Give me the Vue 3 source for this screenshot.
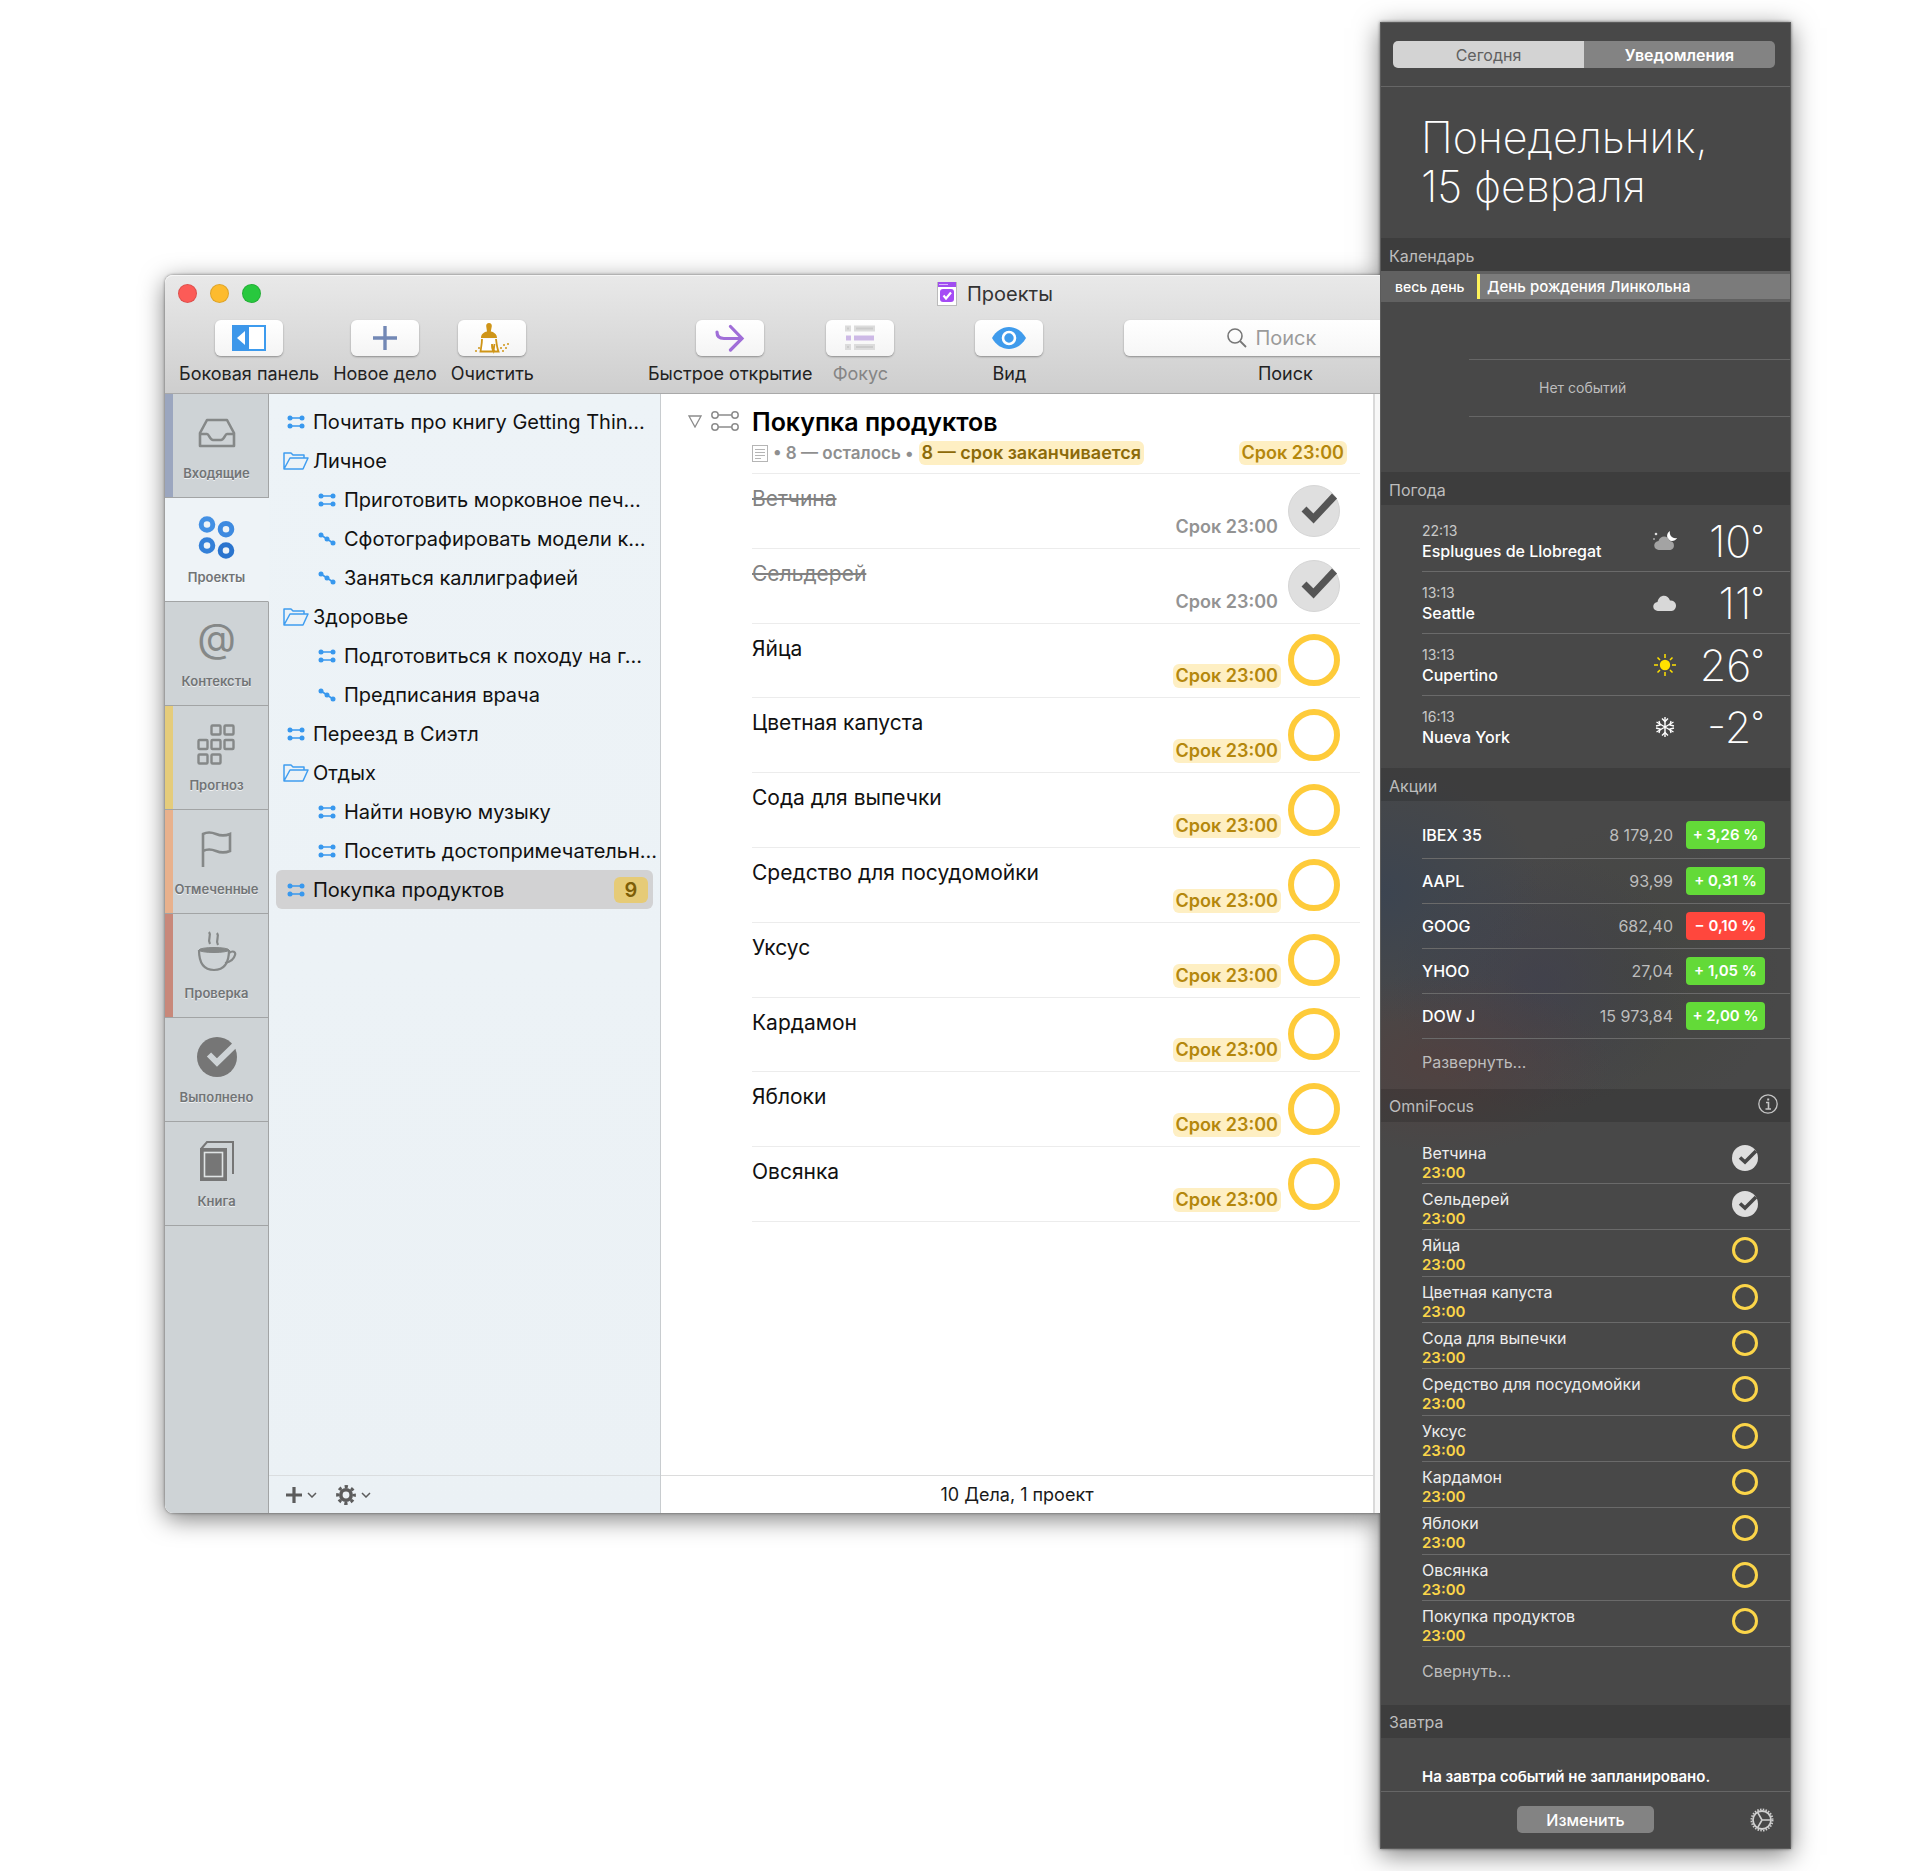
<script setup>
import { ref } from 'vue'

const tabs = [
  { id: 'inbox', label: 'Входящие', mark: 'blue' },
  { id: 'projects', label: 'Проекты' },
  { id: 'contexts', label: 'Контексты' },
  { id: 'forecast', label: 'Прогноз', mark: 'yellow' },
  { id: 'flagged', label: 'Отмеченные', mark: 'orange' },
  { id: 'review', label: 'Проверка', mark: 'red' },
  { id: 'done', label: 'Выполнено' },
  { id: 'book', label: 'Книга' }
]
const activeTab = ref('projects')

const tree = [
  { name: 'Почитать про книгу Getting Thin…', type: 'parallel' },
  { name: 'Личное', type: 'folder' },
  { name: 'Приготовить морковное печ…', type: 'parallel', nested: true },
  { name: 'Сфотографировать модели к…', type: 'sequential', nested: true },
  { name: 'Заняться каллиграфией', type: 'sequential', nested: true },
  { name: 'Здоровье', type: 'folder' },
  { name: 'Подготовиться к походу на г…', type: 'parallel', nested: true },
  { name: 'Предписания врача', type: 'sequential', nested: true },
  { name: 'Переезд в Сиэтл', type: 'parallel' },
  { name: 'Отдых', type: 'folder' },
  { name: 'Найти новую музыку', type: 'parallel', nested: true },
  { name: 'Посетить достопримечательн…', type: 'parallel', nested: true },
  { name: 'Покупка продуктов', type: 'parallel', count: 9 }
]
const selected = ref('Покупка продуктов')

const tasks = ref([
  { name: 'Ветчина', done: true },
  { name: 'Сельдерей', done: true },
  { name: 'Яйца', done: false },
  { name: 'Цветная капуста', done: false },
  { name: 'Сода для выпечки', done: false },
  { name: 'Средство для посудомойки', done: false },
  { name: 'Уксус', done: false },
  { name: 'Кардамон', done: false },
  { name: 'Яблоки', done: false },
  { name: 'Овсянка', done: false }
])
const project = ref({ name: 'Покупка продуктов', done: false })

const weather = [
  { time: '22:13', city: 'Esplugues de Llobregat', icon: 'night', temp: '10' },
  { time: '13:13', city: 'Seattle', icon: 'cloud', temp: '11' },
  { time: '13:13', city: 'Cupertino', icon: 'sun', temp: '26' },
  { time: '16:13', city: 'Nueva York', icon: 'snow', temp: '-2' }
]

const stocks = [
  { name: 'IBEX 35', value: '8 179,20', change: '+ 3,26 %' },
  { name: 'AAPL', value: '93,99', change: '+ 0,31 %' },
  { name: 'GOOG', value: '682,40', change: '− 0,10 %', down: true },
  { name: 'YHOO', value: '27,04', change: '+ 1,05 %' },
  { name: 'DOW J', value: '15 973,84', change: '+ 2,00 %' }
]

const search = ref('')
</script>

<template>
  <div class="desktop">
    <main class="window">
      <header class="toolbar">
        <div class="titlebar">
          <div class="lights">
            <button class="light light_red" aria-label="Закрыть"></button>
            <button class="light light_yellow" aria-label="Свернуть"></button>
            <button class="light light_green" aria-label="Развернуть"></button>
          </div>
          <h1 class="title">
            <svg width="20" height="24" viewBox="0 0 20 24">
              <rect x="0.5" y="0.5" width="19" height="23" fill="#fff" stroke="#bbb" />
              <rect x="1" y="0" width="18" height="5" fill="#a04df0" />
              <rect x="2" y="2" width="9" height="1" fill="#d9b8fb" />
              <rect x="3" y="7" width="14" height="13" rx="3" fill="#a54bf5" />
              <path d="M6.500 13.500l2.500 3 5-6" fill="none" stroke="#fff" stroke-width="2.200" />
            </svg>
            Проекты
          </h1>
        </div>
        <div class="tools">
          <button class="tool">
            <span class="tool__box">
              <svg width="34" height="26" viewBox="0 0 34 26">
                <rect x="1" y="1" width="32" height="24" fill="#fff" stroke="#3d9bee" stroke-width="2" />
                <rect x="0" y="0" width="17" height="26" fill="#3d97ea" />
                <path d="M13 6v14L5 13z" fill="#fff" />
              </svg>
            </span>
            <span class="tool__label">Боковая панель</span>
          </button>
          <button class="tool">
            <span class="tool__box">
              <svg width="24" height="24" viewBox="0 0 24 24">
                <path d="M12 0v24M0 12h24" stroke="#7388b5" stroke-width="3.400" />
              </svg>
            </span>
            <span class="tool__label">Новое дело</span>
          </button>
          <button class="tool">
            <span class="tool__box">
              <svg width="34" height="32" viewBox="0 0 34 32">
                <path d="M14 1c2 0 3 1.500 2.800 3.200l-1 5.300c3.500.8 6.200 3 6.200 6.500H6c0-3.500 2.500-5.700 6-6.500L11.200 4.200C11 2.500 12 1 14 1z" fill="#cf9518" />
                <path d="M7 17c0 5-1 9-1.500 12.500h18C22 26 21.500 21 21 17M17 22c0 3 .5 5 1.500 7l1-7" fill="#fff" stroke="#cf9518" stroke-width="1.800" />
                <path d="M16 22l1 7h3z" fill="#cf9518" />
                <path d="M0 29h2M3 26h2M27 29h2M30 26h2M28 23h2M32 22h2M25 26h2" stroke="#cf9518" stroke-width="1.600" />
              </svg>
            </span>
            <span class="tool__label">Очистить</span>
          </button>
          <button class="tool tool_open">
            <span class="tool__box">
              <svg width="30" height="28" viewBox="0 0 30 28">
                <path d="M2 8c0 4.500 3 6.500 7 6.500h17M15.500 2.500L27 14.500 15.500 26" fill="none" stroke="#a06ed8" stroke-width="3.200" stroke-linecap="round" stroke-linejoin="miter" />
              </svg>
            </span>
            <span class="tool__label">Быстрое открытие</span>
          </button>
          <button class="tool" disabled>
            <span class="tool__box">
              <svg width="30" height="26" viewBox="0 0 30 26">
                <path d="M0 3.500h6M9 3.500h21M0 22h6M9 22h21" stroke="#dcdcdc" stroke-width="6" />
                <path d="M2 3.500h2M11 3.500h17M2 22h2M11 22h17" stroke="#cbcbcb" stroke-width="2" />
                <path d="M1 13h5M9 13h20" stroke="#cdb9e6" stroke-width="5" />
              </svg>
            </span>
            <span class="tool__label tool__label_off">Фокус</span>
          </button>
          <button class="tool tool_far">
            <span class="tool__box">
              <svg width="34" height="22" viewBox="0 0 34 22">
                <path d="M0 11C4 4 10 0 17 0s13 4 17 11c-4 7-10 11-17 11S4 18 0 11z" fill="#3f9bec" />
                <circle cx="17" cy="11" r="6" fill="none" stroke="#fff" stroke-width="2.600" />
              </svg>
            </span>
            <span class="tool__label">Вид</span>
          </button>
          <div class="search tool_far">
            <div class="search__box">
              <svg width="20" height="20" viewBox="0 0 20 20">
                <circle cx="8" cy="8" r="7" fill="none" stroke="#777" stroke-width="1.600" />
                <path d="M13 13l6 6" stroke="#777" stroke-width="1.800" />
              </svg>
              <input id="search" v-model="search" class="search__input" type="text" placeholder="Поиск">
            </div>
            <label class="tool__label" for="search">Поиск</label>
          </div>
        </div>
      </header>

      <div class="body">
        <nav class="tabs">
          <button v-for="tab in tabs" :key="tab.id" class="tab" :class="[tab.mark && 'tab_' + tab.mark, { tab_active: activeTab === tab.id }]" @click="activeTab = tab.id">
            <span class="tab__icon">
              <svg v-if="tab.id === 'inbox'" width="38" height="30" viewBox="0 0 38 30" fill="none" stroke="#858888" stroke-width="2.600" stroke-linejoin="round">
                <path d="M2 15L9 2h20l7 13v13H2z" />
                <path d="M2 16h7c2 0 3 6 6 6h8c3 0 4-6 6-6h7" />
              </svg>
              <svg v-else-if="tab.id === 'projects'" width="37" height="43" viewBox="0 0 37 43" fill="none" stroke-width="5">
                <circle cx="9" cy="8.500" r="5.800" stroke="#4390e4" />
                <circle cx="28" cy="13.200" r="5.800" stroke="#3e8ae0" />
                <circle cx="9" cy="29.500" r="5.800" stroke="#3480d8" />
                <circle cx="28" cy="34.500" r="5.800" stroke="#2a74ce" />
              </svg>
              <span v-else-if="tab.id === 'contexts'" class="tab__at">@</span>
              <svg v-else-if="tab.id === 'forecast'" width="39" height="42" viewBox="0 0 39 42" fill="none" stroke="#858888" stroke-width="2.400">
                <rect x="14.500" y="1.500" width="9" height="9" rx="1" />
                <rect x="27.500" y="1.500" width="9" height="9" rx="1" />
                <rect x="1.500" y="16" width="9" height="9" rx="1" />
                <rect x="14.500" y="16" width="9" height="9" rx="1" />
                <rect x="27.500" y="16" width="9" height="9" rx="1" />
                <rect x="1.500" y="30.500" width="9" height="9" rx="1" />
                <rect x="14.500" y="30.500" width="9" height="9" rx="1" />
              </svg>
              <svg v-else-if="tab.id === 'flagged'" width="31" height="36" viewBox="0 0 31 36" fill="none" stroke="#858888" stroke-width="2.600">
                <path d="M2 36V3c4-2 8-2 13 0s9 2 14 0v17c-5 2-9 2-14 0s-9-2-13 0" />
              </svg>
              <svg v-else-if="tab.id === 'review'" width="40" height="44" viewBox="0 0 40 44" fill="none" stroke="#858888" stroke-width="2.200">
                <path d="M12 1c3 4-2 6 1 12M20 2c3 4-2 6 1 12" />
                <path d="M2 19c0 13 5 20 15 20s15-7 15-20" />
                <ellipse cx="17" cy="19" rx="15" ry="2.500" fill="#858888" stroke-width="1" />
                <path d="M32 22c4-3 7-1 6 2-1 4-5 7-10 8" />
              </svg>
              <svg v-else-if="tab.id === 'done'" width="40" height="40" viewBox="0 0 40 40">
                <circle cx="20" cy="20" r="20" fill="#767676" />
                <path d="M12 17.500l8 8L38 8" fill="none" stroke="#ced3d6" stroke-width="6" />
              </svg>
              <svg v-else width="34" height="40" viewBox="0 0 34 40" fill="none" stroke="#767676" stroke-width="2">
                <path d="M1 8v31h25V8zM1 8l6-7h26v32" />
                <rect x="1.500" y="8" width="24" height="31" fill="#767676" stroke="none" />
                <rect x="4.500" y="11.500" width="18" height="24" stroke="#dfe3e4" stroke-width="1.600" />
              </svg>
            </span>
            {{ tab.label }}
          </button>
        </nav>

        <aside class="sidebar">
          <ul class="tree">
            <li v-for="item in tree" :key="item.name">
              <button class="node" :class="{ node_nested: item.nested, node_selected: selected === item.name }" @click="selected = item.name">
                <span class="node__icon">
                  <svg v-if="item.type === 'folder'" width="26" height="18" viewBox="0 0 26 18" fill="none" stroke="#3f9df0" stroke-width="1.500" stroke-linejoin="round">
                    <path d="M1 17V1h7l2 2h11v3M1 17L7 6h18l-5 11z" />
                  </svg>
                  <svg v-else-if="item.type === 'parallel'" width="18" height="14" viewBox="0 0 18 14" fill="#3898ee">
                    <path d="M3 3h12M3 11h12" stroke="#3898ee" stroke-width="1.600" />
                    <circle cx="3" cy="3" r="2.500" />
                    <circle cx="15" cy="3" r="2.500" />
                    <circle cx="3" cy="11" r="2.500" />
                    <circle cx="15" cy="11" r="2.500" />
                  </svg>
                  <svg v-else width="18" height="14" viewBox="0 0 18 14" fill="#3898ee">
                    <path d="M3 3l12 8" stroke="#3898ee" stroke-width="1.600" />
                    <circle cx="3" cy="3" r="2.500" />
                    <circle cx="9" cy="7" r="2.500" />
                    <circle cx="15" cy="11" r="2.500" />
                  </svg>
                </span>
                <span class="node__name">{{ item.name }}</span>
                <span v-if="item.count" class="node__count">{{ item.count }}</span>
              </button>
            </li>
          </ul>
          <footer class="actions">
            <button class="action" aria-label="Добавить">
              <svg width="16" height="16" viewBox="0 0 16 16"><path d="M8 0v16M0 8h16" stroke="#5c5c5c" stroke-width="3.200" /></svg>
              <svg width="10" height="6" viewBox="0 0 10 6"><path d="M1 1l4 4 4-4" fill="none" stroke="#5c5c5c" stroke-width="1.500" /></svg>
            </button>
            <button class="action" aria-label="Действия">
              <svg width="20" height="20" viewBox="0 0 20 20" fill="none" stroke="#5c5c5c">
                <circle cx="10" cy="10" r="5.200" stroke-width="3.600" />
                <circle cx="10" cy="10" r="8.400" stroke-width="3" stroke-dasharray="3.300 3.300" stroke-dashoffset="1.650" />
              </svg>
              <svg width="10" height="6" viewBox="0 0 10 6"><path d="M1 1l4 4 4-4" fill="none" stroke="#5c5c5c" stroke-width="1.500" /></svg>
            </button>
          </footer>
        </aside>

        <section class="content">
          <header class="project">
            <div class="project__marks">
              <svg width="14" height="13" viewBox="0 0 14 13"><path d="M1 1h12L7 12z" fill="none" stroke="#8c8c8c" stroke-width="1.300" /></svg>
              <svg width="28" height="20" viewBox="0 0 28 20" fill="none" stroke="#8c8c8c" stroke-width="1.500">
                <circle cx="4" cy="4" r="3.200" />
                <circle cx="24" cy="4" r="3.200" />
                <circle cx="4" cy="16" r="3.200" />
                <circle cx="24" cy="16" r="3.200" />
                <path d="M7 4h14M7 16h14" />
              </svg>
            </div>
            <div class="project__info">
              <h2 class="project__title">{{ project.name }}</h2>
              <p class="project__meta">
                <svg width="16" height="17" viewBox="0 0 16 17" fill="none" stroke="#b5b5b5">
                  <rect x="0.500" y="0.500" width="15" height="16" />
                  <path d="M3 4.500h10M3 7.500h10M3 10.500h10M3 13.500h6" />
                </svg>
                <span>• 8 — осталось •</span>
                <span class="badge badge_dark">8 — срок заканчивается</span>
                <span class="badge project__due">Срок 23:00</span>
              </p>
            </div>
          </header>
          <ul class="tasks">
            <li v-for="(task, i) in tasks" :key="task.name" class="task">
              <label class="task__name" :class="{ task__name_done: task.done }" :for="'task' + i">{{ task.name }}</label>
              <span class="badge task__due" :class="{ badge_off: task.done }">Срок 23:00</span>
              <span class="check">
                <input :id="'task' + i" v-model="task.done" class="check__input" type="checkbox">
                <svg v-if="task.done" class="check__mark" viewBox="0 0 52 52">
                  <path d="M16 24l9.500 9.500L46.500 11" fill="none" stroke="#555" stroke-width="7" />
                </svg>
              </span>
            </li>
          </ul>
          <footer class="status">10 Дела, 1 проект</footer>
        </section>
      </div>
    </main>

    <aside class="panel">
      <div class="switch">
        <button class="switch__btn switch__btn_on">Сегодня</button>
        <button class="switch__btn">Уведомления</button>
      </div>
      <p class="date">Понедельник,<br>15 февраля</p>

      <h3 class="head">Календарь</h3>
      <div class="allday">
        <span class="allday__label">весь день</span>
        <span class="allday__event">День рождения Линкольна</span>
      </div>
      <div class="agenda">
        <p class="agenda__empty">Нет событий</p>
      </div>

      <h3 class="head">Погода</h3>
      <ul class="weather">
        <li v-for="place in weather" :key="place.city" class="place">
          <div class="place__text">
            <span class="place__time">{{ place.time }}</span>
            <span class="place__city">{{ place.city }}</span>
          </div>
          <svg v-if="place.icon === 'night'" width="26" height="24" viewBox="0 0 26 24">
            <path d="M18 2c-5 3-3 10 2 10 2 0 4-1 5-3-5 1-8-3-7-7z" fill="#fff" />
            <circle cx="4" cy="5" r="1.300" fill="#ddd" />
            <circle cx="2" cy="10" r="1" fill="#aaa" />
            <path d="M7 21a4.500 4.500 0 0 1-.5-9C8 6 16 6 18 12a4.600 4.600 0 0 1 .5 9z" fill="#a3a3a3" />
          </svg>
          <svg v-else-if="place.icon === 'cloud'" width="26" height="24" viewBox="0 0 26 24">
            <path d="M6 20a4.500 4.500 0 0 1-.5-9C7 3 16 3 18 9.500a5.200 5.200 0 0 1 1.500 10.500z" fill="#d8d8d8" />
          </svg>
          <svg v-else-if="place.icon === 'sun'" width="26" height="24" viewBox="0 0 26 24">
            <circle cx="13" cy="12" r="5.200" fill="#ffe100" />
            <path d="M13 1v4M13 19v4M2 12h4M20 12h4M5.500 4.500l2.500 2.500M18 17l2.500 2.500M5.500 19.500L8 17M18 7l2.500-2.500" stroke="#ffe100" stroke-width="1.500" />
          </svg>
          <svg v-else width="26" height="24" viewBox="0 0 26 24" fill="none" stroke="#fff" stroke-width="1.400">
            <path d="M13 2v20M4.500 7l17 10M21.500 7l-17 10" />
            <path d="M10 3.500l3 3 3-3M10 20.500l3-3 3 3M4 11l4-1-1-4M22 13l-4 1 1 4M22 11l-4-1 1-4M4 13l4 1-1 4" />
          </svg>
          <span class="place__temp">{{ place.temp }}<span class="place__degree">°</span></span>
        </li>
      </ul>

      <h3 class="head">Акции</h3>
      <table class="stocks">
        <tbody>
          <tr v-for="stock in stocks" :key="stock.name">
            <th scope="row" class="stocks__name">{{ stock.name }}</th>
            <td class="stocks__value">{{ stock.value }}</td>
            <td class="stocks__cell"><span class="change" :class="{ change_down: stock.down }">{{ stock.change }}</span></td>
          </tr>
        </tbody>
      </table>
      <button class="more">Развернуть…</button>

      <h3 class="head">
        OmniFocus
        <button class="head__info" aria-label="Сведения">
          <svg width="20" height="20" viewBox="0 0 20 20" fill="none" stroke="#c4c4c4">
            <circle cx="10" cy="10" r="9.200" stroke-width="1.300" />
            <path d="M8 8.500h2.500V15M7.500 15h5.500" stroke-width="1.600" />
            <path d="M9.200 5.500h2" stroke-width="2" />
          </svg>
        </button>
      </h3>
      <ul class="focus">
        <li v-for="(task, i) in [...tasks, project]" :key="task.name" class="todo">
          <label class="todo__text" :for="'todo' + i">
            <span class="todo__name">{{ task.name }}</span>
            <span class="todo__time">23:00</span>
          </label>
          <span class="check check_small">
            <input :id="'todo' + i" v-model="task.done" class="check__input" type="checkbox">
            <svg v-if="task.done" class="check__mark" viewBox="0 0 26 26">
              <path d="M8 12.500l5 4.500L24 6" fill="none" stroke="#484848" stroke-width="3.600" />
            </svg>
          </span>
        </li>
      </ul>
      <button class="more more_last">Свернуть…</button>

      <h3 class="head">Завтра</h3>
      <p class="tomorrow">На завтра событий не запланировано.</p>
      <footer class="foot">
        <button class="foot__edit">Изменить</button>
        <button class="foot__gear" aria-label="Настройки">
          <svg width="24" height="24" viewBox="0 0 24 24" fill="none" stroke="#cfcfcf">
            <circle cx="12" cy="12" r="9" stroke-width="1.800" />
            <circle cx="12" cy="12" r="10.600" stroke-width="1.800" stroke-dasharray="1.500 1.300" />
            <path d="M12 12h9M12 12L7.500 4.200M12 12l-4.500 7.800" stroke-width="1.600" />
          </svg>
        </button>
      </footer>
    </aside>
  </div>
</template>

<style>
body {
  margin: 0;
  background: #fff;
}
</style>

<style scoped>
.desktop {
  display: flex;
  align-items: flex-start;
  padding: 22px 133px 23px 165px;
  font-family: Inter, "Liberation Sans", sans-serif;
  color: #1a1a1a;
}

button,
input {
  margin: 0;
  padding: 0;
  border: none;
  background: none;
  font: inherit;
  color: inherit;
}

ul,
p,
h1,
h2,
h3 {
  margin: 0;
  padding: 0;
  list-style: none;
  font-weight: 400;
}

svg {
  display: block;
  flex: none;
}

.window {
  position: relative;
  z-index: 1;
  display: flex;
  flex-direction: column;
  flex: 1;
  min-width: 0;
  margin-top: 253px;
  border-radius: 8px 0 0 8px;
  box-shadow: 0 6px 24px rgba(0, 0, 0, 0.5), 0 0 3px rgba(0, 0, 0, 0.5);
  /* the right edge slides under the notification panel */
  clip-path: inset(-60px 0 -60px -60px);
}

.toolbar {
  overflow: hidden;
  border-bottom: 1px solid #a9a9a9;
  border-radius: 8px 0 0 0;
  background: linear-gradient(#e9e9e9, #cecece);
  box-shadow: inset 0 1px 0 #f6f6f6;
}

.titlebar {
  display: flex;
  align-items: center;
  height: 37px;
  padding-left: 13px;
}

.lights {
  display: flex;
  gap: 13px;
}

.light {
  width: 19px;
  height: 19px;
  border: 1px solid rgba(0, 0, 0, 0.12);
  border-radius: 50%;
}

.light_red {
  background: #fc5b57;
}

.light_yellow {
  background: #fdbb2e;
}

.light_green {
  background: #28c83e;
}

.title {
  display: flex;
  align-items: center;
  gap: 10px;
  margin-left: 676px;
  font-size: 20px;
  color: #333;
}

.tools {
  display: flex;
  align-items: flex-start;
  gap: 14px;
  height: 73px;
  padding: 8px 0 0 14px;
}

.tool {
  display: flex;
  flex: none;
  flex-direction: column;
  align-items: center;
}

.tool_open {
  margin-left: 100px;
}

.tool_far {
  margin-left: 67px;
}

.tool__box {
  display: flex;
  align-items: center;
  justify-content: center;
  width: 68px;
  height: 36px;
  border-radius: 6px;
  background: linear-gradient(#fff, #f4f4f4);
  box-shadow: 0 1px 2px rgba(0, 0, 0, 0.35);
}

.tool__label {
  margin-top: 6px;
  font-size: 18px;
  line-height: 24px;
  white-space: nowrap;
  color: #222;
}

.tool__label_off {
  color: #858585;
}

.search {
  display: flex;
  flex: none;
  flex-direction: column;
  align-items: center;
  width: 322px;
}

.search__box {
  display: flex;
  align-items: center;
  gap: 8px;
  box-sizing: border-box;
  width: 100%;
  height: 36px;
  padding-left: 103px;
  border-radius: 6px;
  background: linear-gradient(#fff, #f6f6f6);
  box-shadow: 0 1px 2px rgba(0, 0, 0, 0.35);
}

.search__input {
  flex: 1;
  min-width: 0;
  outline: none;
  font-size: 20px;
}

.search__input::placeholder {
  color: #9b9b9b;
}

.body {
  display: flex;
  height: 1119px;
  border-radius: 0 0 0 8px;
  overflow: hidden;
  background: #f7f7f7;
}

.tabs {
  flex: none;
  width: 104px;
  background: linear-gradient(90deg, transparent 103px, #a2a4a5 103px), #ced3d6;
}

.tab {
  display: flex;
  flex-direction: column;
  align-items: center;
  box-sizing: border-box;
  width: 104px;
  height: 104px;
  padding-top: 13px;
  border: solid #a2a4a5;
  border-width: 0 1px 1px 0;
  font-size: 13px;
  line-height: 18px;
  font-weight: 600;
  color: #717476;
  text-shadow: 0 1px 0 rgba(255, 255, 255, 0.7);
}

.tab__icon {
  display: flex;
  align-items: center;
  justify-content: center;
  height: 52px;
  margin-bottom: 5px;
}

.tab__at {
  padding-bottom: 6px;
  font-size: 40px;
  line-height: 46px;
  font-weight: 400;
  color: #858888;
  text-shadow: none;
}

.tab_active {
  border-right-color: #eef3f7;
  background: #eef3f7;
}

.tab_blue {
  box-shadow: inset 8px 0 0 #9ba6bf;
}

.tab_yellow {
  box-shadow: inset 8px 0 0 #e5cc7b;
}

.tab_orange {
  box-shadow: inset 8px 0 0 #e8b18d;
}

.tab_red {
  box-shadow: inset 8px 0 0 #c8887a;
}

.sidebar {
  display: flex;
  flex: none;
  flex-direction: column;
  width: 391px;
  border-right: 1px solid #c8cccf;
  background: linear-gradient(#edf3f7, #ebf1f5);
}

.tree {
  flex: 1;
  padding: 8px 7px 0;
}

.node {
  display: flex;
  align-items: center;
  width: 100%;
  height: 39px;
  padding: 0 5px;
  border-radius: 6px;
  font-size: 20px;
  text-align: left;
  white-space: nowrap;
  color: #111;
}

.node_nested {
  padding-left: 36px;
}

.node_selected {
  background: #d2d2d3;
}

.node__icon {
  display: flex;
  flex: none;
  justify-content: center;
  width: 30px;
  margin-right: 2px;
}

.node__count {
  width: 34px;
  margin-left: auto;
  border-radius: 6px;
  background: #e6cb77;
  line-height: 26px;
  font-weight: 600;
  text-align: center;
  color: #7d5e07;
}

.actions {
  display: flex;
  align-items: center;
  gap: 19px;
  height: 37px;
  padding-left: 17px;
  border-top: 1px solid #dadddf;
}

.action {
  display: flex;
  align-items: center;
  gap: 5px;
}

.content {
  display: flex;
  flex: 1;
  flex-direction: column;
  min-width: 0;
  margin-right: 5px;
  border-right: 2px solid #d9d9d9;
  background: #fff;
}

.project {
  display: flex;
  gap: 13px;
  padding: 13px 13px 0 27px;
}

.project__marks {
  display: flex;
  align-items: center;
  gap: 9px;
  height: 28px;
}

.project__info {
  flex: 1;
  padding-bottom: 8px;
  border-bottom: 1px solid #ececec;
}

.project__title {
  font-size: 25px;
  line-height: 30px;
  font-weight: 600;
  color: #000;
}

.project__meta {
  display: flex;
  align-items: center;
  gap: 5px;
  margin-top: 4px;
  font-size: 17px;
  font-weight: 600;
  color: #8f8f8f;
  white-space: nowrap;
}

.badge {
  padding: 0 3px;
  border-radius: 6px;
  background: #feefc3;
  font-size: 18px;
  line-height: 24px;
  font-weight: 600;
  color: #b4870c;
  white-space: nowrap;
}

.badge_dark {
  color: #8c6a09;
}

.badge_off {
  background: none;
  color: #939393;
}

.project__due {
  margin: 0 13px 0 auto;
}

.tasks {
  display: grid;
  grid-auto-rows: 1fr;
  height: 748px;
  margin: 0 13px 0 91px;
}

.task {
  display: flex;
  align-items: center;
  gap: 7px;
  padding-right: 20px;
  border-bottom: 1px solid #ececec;
}

.task__name {
  flex: 1;
  align-self: flex-start;
  padding-top: 12px;
  font-size: 21px;
  line-height: 26px;
  color: #111;
}

.task__name_done {
  color: #828282;
  text-decoration: line-through;
}

.task__due {
  align-self: flex-end;
  margin-bottom: 9px;
}

.check {
  display: grid;
  flex: none;
  width: 52px;
  height: 52px;
}

.check__input {
  grid-area: 1 / 1;
  box-sizing: border-box;
  width: 100%;
  height: 100%;
  border: 6px solid #fecb3a;
  border-radius: 50%;
  appearance: none;
}

.check__input:checked {
  border: 1px solid #d5d5d5;
  background: #dfdfdf;
}

.check__mark {
  grid-area: 1 / 1;
  pointer-events: none;
}

.check_small {
  width: 26px;
  height: 26px;
}

.check_small .check__input {
  border-width: 3px;
  border-color: #fbd549;
}

.check_small .check__input:checked {
  border: none;
  background: #dedede;
}

.status {
  height: 37px;
  margin-top: auto;
  border-top: 1px solid #dcdcdc;
  font-size: 18px;
  line-height: 38px;
  text-align: center;
}

.panel {
  flex: 0 0 411px;
  box-sizing: border-box;
  border: 1px solid #5c5c5c;
  background:
    radial-gradient(160px 130px at 0 870px, rgba(52, 66, 86, 0.6), transparent),
    radial-gradient(170px 90px at 60px 1040px, rgba(86, 62, 60, 0.6), transparent),
    radial-gradient(150px 130px at 160px 960px, rgba(62, 62, 80, 0.6), transparent),
    radial-gradient(150px 150px at 250px 950px, rgba(66, 68, 60, 0.6), transparent),
    #484848;
  box-shadow: 0 6px 24px rgba(0, 0, 0, 0.5), 0 0 3px rgba(0, 0, 0, 0.5);
  font-size: 16px;
  color: #fff;
}

.switch {
  display: flex;
  padding: 18px 15px 18px 12px;
  border-bottom: 1px solid #666;
}

.switch__btn {
  flex: 1;
  height: 27px;
  border-radius: 0 5px 5px 0;
  background: #838383;
  font-size: 16px;
  font-weight: 600;
}

.switch__btn_on {
  border-radius: 5px 0 0 5px;
  background: #d3d3d3;
  font-weight: 400;
  color: #606060;
}

.date {
  padding: 26px 0 27px 40px;
  font-size: 43px;
  line-height: 49px;
  font-weight: 200;
}

.head {
  display: flex;
  align-items: center;
  justify-content: space-between;
  height: 33px;
  padding: 2px 12px 0 8px;
  box-sizing: border-box;
  background: rgba(0, 0, 0, 0.14);
  font-size: 16px;
  color: #bdbdbd;
}

.allday {
  display: flex;
  align-items: center;
  height: 31px;
  background: #616161;
  font-size: 15px;
  font-weight: 500;
}

.allday__label {
  width: 96px;
  box-sizing: border-box;
  padding-left: 14px;
  font-size: 14px;
}

.allday__event {
  flex: 1;
  padding-left: 7px;
  border-left: 3px solid #fdf25a;
  background: #7b7b7b;
  line-height: 25px;
}

.agenda {
  padding: 57px 0 55px 88px;
}

.agenda__empty {
  padding-left: 70px;
  border: solid #666;
  border-width: 1px 0;
  font-size: 14px;
  line-height: 56px;
  color: #bdbdbd;
}

.weather {
  padding: 5px 0 10px 41px;
}

.place {
  display: flex;
  align-items: center;
  height: 61px;
  padding-right: 26px;
  border-bottom: 1px solid #6a6a6a;
}

.place:last-child {
  border-color: transparent;
}

.place__text {
  display: flex;
  flex: 1;
  flex-direction: column;
  line-height: 20px;
}

.place__time {
  font-size: 14px;
  color: #c8c8c8;
}

.place__city {
  font-size: 16px;
  font-weight: 500;
}

.place__temp {
  display: flex;
  align-items: flex-start;
  justify-content: flex-end;
  width: 86px;
  font-size: 43px;
  line-height: 48px;
  font-weight: 200;
}

.place__degree {
  font-size: 28px;
  line-height: 38px;
  font-weight: 300;
}

.stocks {
  width: calc(100% - 41px);
  margin: 12px 0 0 41px;
  border-collapse: collapse;
}

.stocks th,
.stocks td {
  box-sizing: border-box;
  height: 45px;
  padding: 0;
  border-bottom: 1px solid #6a6a6a;
}

.stocks__name {
  font-size: 16px;
  font-weight: 500;
  text-align: left;
}

.stocks__value {
  text-align: right;
  color: #bdbdbd;
}

.stocks__cell {
  width: 117px;
}

.change {
  display: block;
  width: 79px;
  margin-left: 13px;
  border-radius: 4px;
  background: #63da38;
  font-size: 15px;
  line-height: 28px;
  font-weight: 600;
  text-align: center;
}

.change_down {
  background: #ff473d;
}

.more {
  display: block;
  margin: 0 0 3px 41px;
  font-size: 16px;
  line-height: 47px;
  color: #bdbdbd;
}

.more_last {
  margin-bottom: 10px;
}

.head__info {
  margin-top: -4px;
}

.focus {
  display: grid;
  grid-auto-rows: 1fr;
  height: 510px;
  padding: 16px 0 0 41px;
}

.todo {
  display: flex;
  align-items: flex-start;
  padding-right: 32px;
  border-bottom: 1px solid #6a6a6a;
}

.todo__text {
  display: flex;
  flex: 1;
  flex-direction: column;
  padding-top: 5px;
  line-height: 20px;
}

.todo__name {
  color: #ededed;
}

.todo__time {
  font-size: 15px;
  font-weight: 600;
  color: #fbd549;
}

.todo .check {
  margin-top: 7px;
}

.tomorrow {
  padding: 28px 0 4px 41px;
  border-bottom: 1px solid #666;
  font-size: 15px;
  line-height: 21px;
  font-weight: 600;
}

.foot {
  display: grid;
  grid-template-columns: 1fr 137px 1fr;
  align-items: center;
  height: 56px;
}

.foot__edit {
  grid-column: 2;
  height: 27px;
  border-radius: 5px;
  background: #838383;
  font-size: 16px;
  font-weight: 500;
}

.foot__gear {
  justify-self: end;
  margin-right: 16px;
}
</style>
